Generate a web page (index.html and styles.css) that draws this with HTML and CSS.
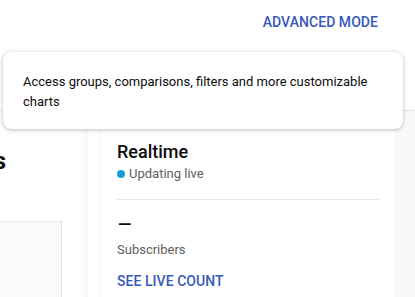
FILE: index.html
```html
<!DOCTYPE html>
<html>
<head>
<meta charset="utf-8">
<link rel="stylesheet" href="styles.css">
</head>
<body>
<div class="page">
  <header class="topbar">
    <a class="advanced">ADVANCED MODE</a>
  </header>
  <main class="content">
    <section class="left">
      <div class="heading-clip"><h1 class="heading">Channel analytics</h1></div>
      <div class="chart-box"></div>
    </section>
    <section class="card">
      <h2 class="card-title">Realtime</h2>
      <div class="live"><span class="dot"></span><span>Updating live</span></div>
      <hr class="divider">
      <div class="metric">–</div>
      <div class="metric-label">Subscribers</div>
      <a class="live-count">SEE LIVE COUNT</a>
    </section>
    <div class="gutter"></div>
  </main>
  <div class="tooltip">Access groups, comparisons, filters and more customizable charts</div>
</div>
</body>
</html>
```
FILE: styles.css
```css
* { box-sizing: border-box; }
html, body { margin: 0; padding: 0; }
body {
  font-family: Roboto, "Noto Sans", Arial, sans-serif;
  background: #ffffff;
  color: #0d0d0d;
  width: 415px;
  height: 297px;
  overflow: hidden;
}
.page { position: relative; height: 297px; }
.topbar {
  height: 111px;
  border-bottom: 1px solid #e6e6e6;
  display: flex;
  justify-content: flex-end;
  align-items: flex-start;
  padding: 12px 37px 0 0;
}
.advanced {
  font-size: 14px;
  line-height: 20px;
  font-weight: 500;
  color: #3759b8;
  letter-spacing: 0.05px;
}
.content {
  display: flex;
  height: 186px;
}
.left {
  width: 88px;
  flex: none;
  display: flex;
  flex-direction: column;
  background: linear-gradient(to right, #ffffff 0, #ffffff 80px, #f6f6f7 100%);
}
.heading-clip {
  width: 6px;
  display: flex;
  justify-content: flex-end;
  margin-top: 34px;
}
.heading {
  margin: 0;
  white-space: nowrap;
  font-size: 24px;
  line-height: 32px;
  font-weight: 700;
}
.chart-box {
  margin-top: 44px;
  width: 62px;
  flex: 1;
  border-top: 1px solid #ececec;
  border-right: 1px solid #e3e3e3;
  background: #fafafa;
}
.card {
  width: 294px;
  flex: none;
  margin: 9px 0 0 13px;
  padding: 20px 16px 0 16px;
  background: #ffffff;
  box-shadow: 0 0 6px rgba(0,0,0,0.06);
  display: flex;
  flex-direction: column;
  align-items: flex-start;
}
.gutter { flex: 1; background: #f9f9fa; }
.card-title {
  margin: 0;
  font-size: 18px;
  line-height: 24px;
  font-weight: 500;
  color: #0d0d0d;
}
.live {
  margin-top: 1px;
  display: flex;
  align-items: center;
  gap: 4px;
  font-size: 13px;
  line-height: 18px;
  color: #606060;
}
.dot {
  width: 8px;
  height: 8px;
  border-radius: 50%;
  background: #1a9ad6;
}
.divider {
  align-self: stretch;
  margin: 16px 0 0 0;
  border: 0;
  border-top: 1px solid #e5e5e5;
}
.metric {
  margin-top: 9px;
  font-size: 24px;
  line-height: 32px;
  color: #0d0d0d;
}
.metric-label {
  font-size: 13px;
  line-height: 18px;
  color: #606060;
}
.live-count {
  margin-top: 12px;
  font-size: 14px;
  line-height: 20px;
  font-weight: 500;
  color: #3759b8;
  letter-spacing: 0.05px;
}
.tooltip {
  position: absolute;
  left: 3px;
  top: 52px;
  width: 400px;
  height: 77px;
  padding: 20px 30px 0 20px;
  background: #ffffff;
  border-radius: 8px;
  box-shadow: 0 1px 4px rgba(0,0,0,0.25), 0 0 1px rgba(0,0,0,0.1);
  font-size: 13px;
  line-height: 20px;
  color: #0d0d0d;
}
```
